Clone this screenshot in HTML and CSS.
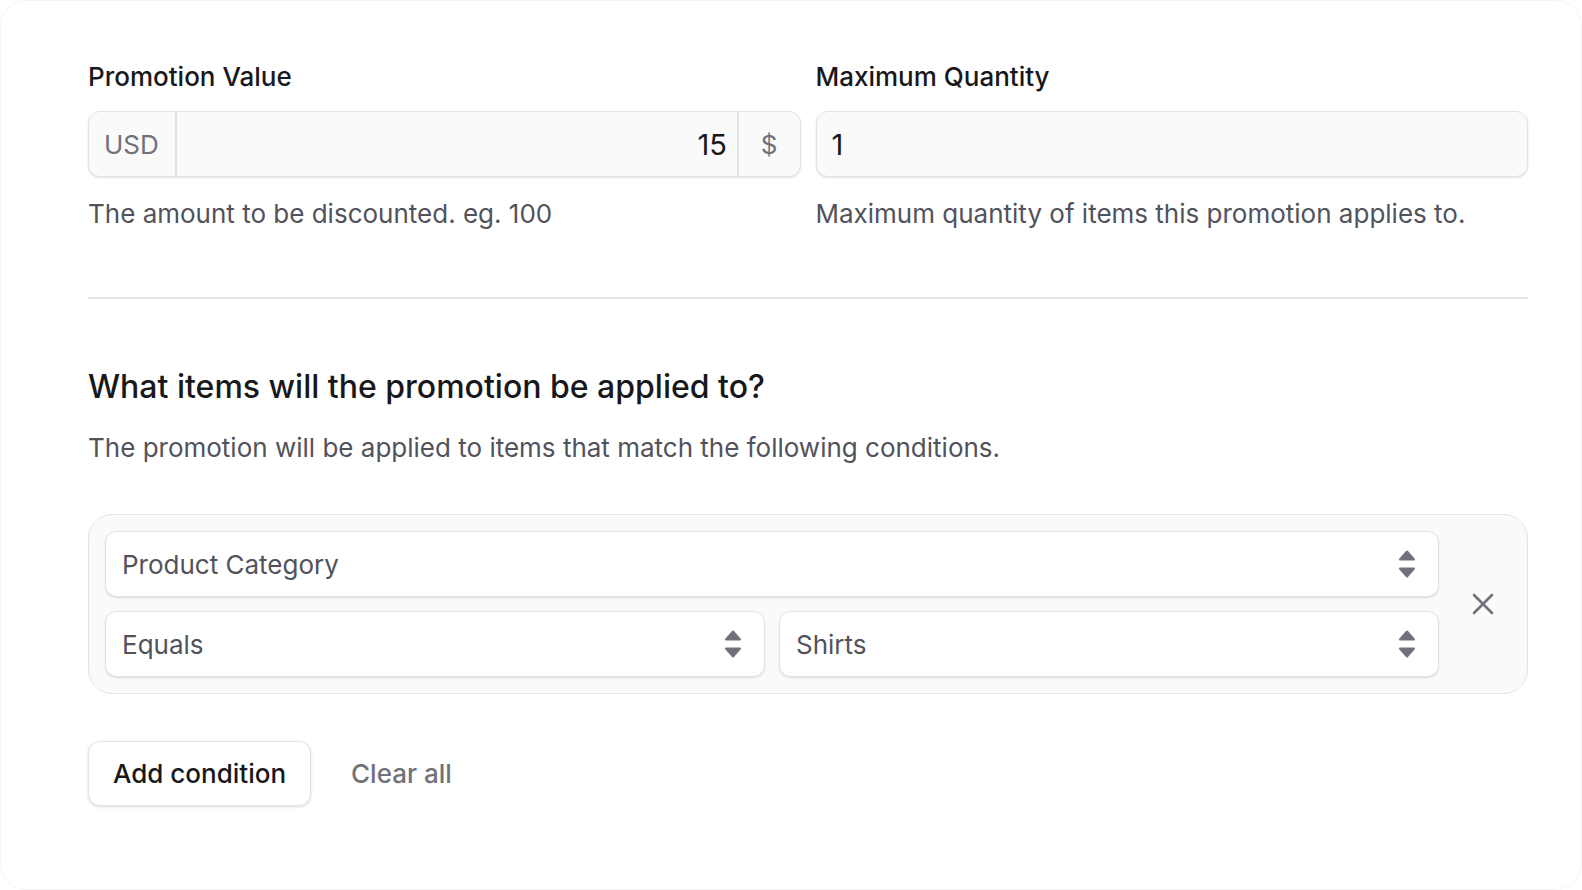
FILE: index.html
```html
<!DOCTYPE html>
<html lang="en">
<head>
    <meta charset="UTF-8">
    <title>Promotion</title>
    <link rel="stylesheet" href="styles.css">
</head>
<body>
    <div class="card">
        <div class="field-row">
            <div class="field">
                <label for="promoValue">Promotion Value</label>
                <div class="input-group">
                    <span class="addon addon-left">USD</span>
                    <input type="text" id="promoValue" class="group-input" value="15">
                    <span class="addon addon-right">$</span>
                </div>
                <p class="hint">The amount to be discounted. eg. 100</p>
            </div>
            <div class="field">
                <label for="maxQty">Maximum Quantity</label>
                <input type="text" id="maxQty" class="text-input" value="1">
                <p class="hint">Maximum quantity of items this promotion applies to.</p>
            </div>
        </div>

        <hr class="divider">

        <h2>What items will the promotion be applied to?</h2>
        <p class="subtitle">The promotion will be applied to items that match the following conditions.</p>

        <div class="condition">
            <div class="condition-fields">
                <div class="select-wrap">
                    <select class="select">
                        <option>Product Category</option>
                    </select>
                    <svg class="chevrons" width="18" height="28" viewBox="0 0 18 28"><path d="M9 1.5 L16 9.5 H2 Z" fill="#71717a" stroke="#71717a" stroke-width="2" stroke-linejoin="round"/><path d="M9 26.5 L16 18.5 H2 Z" fill="#71717a" stroke="#71717a" stroke-width="2" stroke-linejoin="round"/></svg>
                </div>
                <div class="condition-pair">
                    <div class="select-wrap">
                        <select class="select">
                            <option>Equals</option>
                        </select>
                        <svg class="chevrons" width="18" height="28" viewBox="0 0 18 28"><path d="M9 1.5 L16 9.5 H2 Z" fill="#71717a" stroke="#71717a" stroke-width="2" stroke-linejoin="round"/><path d="M9 26.5 L16 18.5 H2 Z" fill="#71717a" stroke="#71717a" stroke-width="2" stroke-linejoin="round"/></svg>
                    </div>
                    <div class="select-wrap">
                        <select class="select">
                            <option>Shirts</option>
                        </select>
                        <svg class="chevrons" width="18" height="28" viewBox="0 0 18 28"><path d="M9 1.5 L16 9.5 H2 Z" fill="#71717a" stroke="#71717a" stroke-width="2" stroke-linejoin="round"/><path d="M9 26.5 L16 18.5 H2 Z" fill="#71717a" stroke="#71717a" stroke-width="2" stroke-linejoin="round"/></svg>
                    </div>
                </div>
            </div>
            <button type="button" class="remove-btn" aria-label="Remove">
                <svg width="22" height="22" viewBox="0 0 22 22"><path d="M2 2 L20 20 M20 2 L2 20" stroke="#71717a" stroke-width="2.6" stroke-linecap="round"/></svg>
            </button>
        </div>

        <div class="actions">
            <button type="button" class="btn-secondary">Add condition</button>
            <button type="button" class="btn-link">Clear all</button>
        </div>
    </div>
</body>
</html>
```

FILE: styles.css
```css
/* Sayfa */
body {
    margin: 0;
    padding: 0;
    background-color: #ffffff;
    font-family: Inter, "Noto Sans", sans-serif;
    color: #18181b;
}
.card {
    box-sizing: border-box;
    height: 890px;
    padding: 58px 53px 0 87px;
    border: 1px solid #f4f4f5;
    border-radius: 26px;
    background-color: #ffffff;
}
.field-row {
    display: grid;
    grid-template-columns: 1fr 1fr;
    column-gap: 15px;
}
label {
    display: block;
    font-size: 26px;
    font-weight: 500;
    line-height: 36px;
    margin-bottom: 16px;
}
.input-group,
.text-input {
    box-sizing: border-box;
    height: 66px;
    border: 1px solid #e4e4e7;
    border-radius: 12px;
    background-color: #fafafa;
    box-shadow: 0 1px 2px rgba(0, 0, 0, 0.12);
}
.input-group {
    display: flex;
    align-items: stretch;
}
.addon {
    display: flex;
    align-items: center;
    color: #71717a;
    font-size: 26px;
}
.addon-left {
    padding: 0 16px 0 15px;
    border-right: 2px solid #e4e4e7;
}
.addon-right {
    padding: 0 22px;
    border-left: 2px solid #e4e4e7;
}
.group-input,
.text-input {
    font-family: inherit;
    font-size: 29px;
    color: #18181b;
    outline: none;
}
.group-input {
    flex: 1;
    min-width: 0;
    border: none;
    background: transparent;
    text-align: right;
    padding: 0 10px;
}
.text-input {
    width: 100%;
    padding: 0 15px;
}
.hint {
    margin: 20px 0 0;
    font-size: 26px;
    line-height: 34px;
    color: #52525b;
}
.divider {
    border: none;
    border-top: 2px solid #e4e4e7;
    margin: 66px 0 0;
}
h2 {
    margin: 68px 0 0;
    font-size: 32px;
    font-weight: 500;
    line-height: 40px;
}
.subtitle {
    margin: 24px 0 0;
    font-size: 26px;
    line-height: 34px;
    color: #52525b;
}
.condition {
    display: flex;
    align-items: center;
    margin-top: 49px;
    padding: 16px 0 16px 16px;
    border: 1px solid #e4e4e7;
    border-radius: 24px;
    background-color: #fafafa;
}
.condition-fields {
    flex: 1;
    display: flex;
    flex-direction: column;
    gap: 14px;
}
.condition-pair {
    display: grid;
    grid-template-columns: 1fr 1fr;
    column-gap: 14px;
}
.select-wrap {
    position: relative;
}
.select {
    box-sizing: border-box;
    width: 100%;
    height: 66px;
    padding: 0 50px 0 16px;
    border: 1px solid #e4e4e7;
    border-radius: 12px;
    background-color: #ffffff;
    box-shadow: 0 1px 2px rgba(0, 0, 0, 0.12);
    font-family: inherit;
    font-size: 26px;
    color: #52525b;
    appearance: none;
    -webkit-appearance: none;
    outline: none;
}
.chevrons {
    position: absolute;
    right: 23px;
    top: 19px;
    pointer-events: none;
}
.remove-btn {
    width: 88px;
    display: flex;
    align-items: center;
    justify-content: center;
    border: none;
    background: transparent;
    padding: 0;
    cursor: pointer;
}
.actions {
    display: flex;
    align-items: center;
    gap: 40px;
    margin-top: 47px;
}
.btn-secondary {
    box-sizing: border-box;
    height: 65px;
    padding: 0 24px;
    border: 1px solid #e4e4e7;
    border-radius: 12px;
    background-color: #ffffff;
    box-shadow: 0 1px 3px rgba(0, 0, 0, 0.14);
    font-family: inherit;
    font-size: 26px;
    font-weight: 500;
    color: #18181b;
    cursor: pointer;
}
.btn-link {
    border: none;
    background: transparent;
    padding: 0;
    font-family: inherit;
    font-size: 26px;
    font-weight: 500;
    color: #71717a;
    cursor: pointer;
}
```
